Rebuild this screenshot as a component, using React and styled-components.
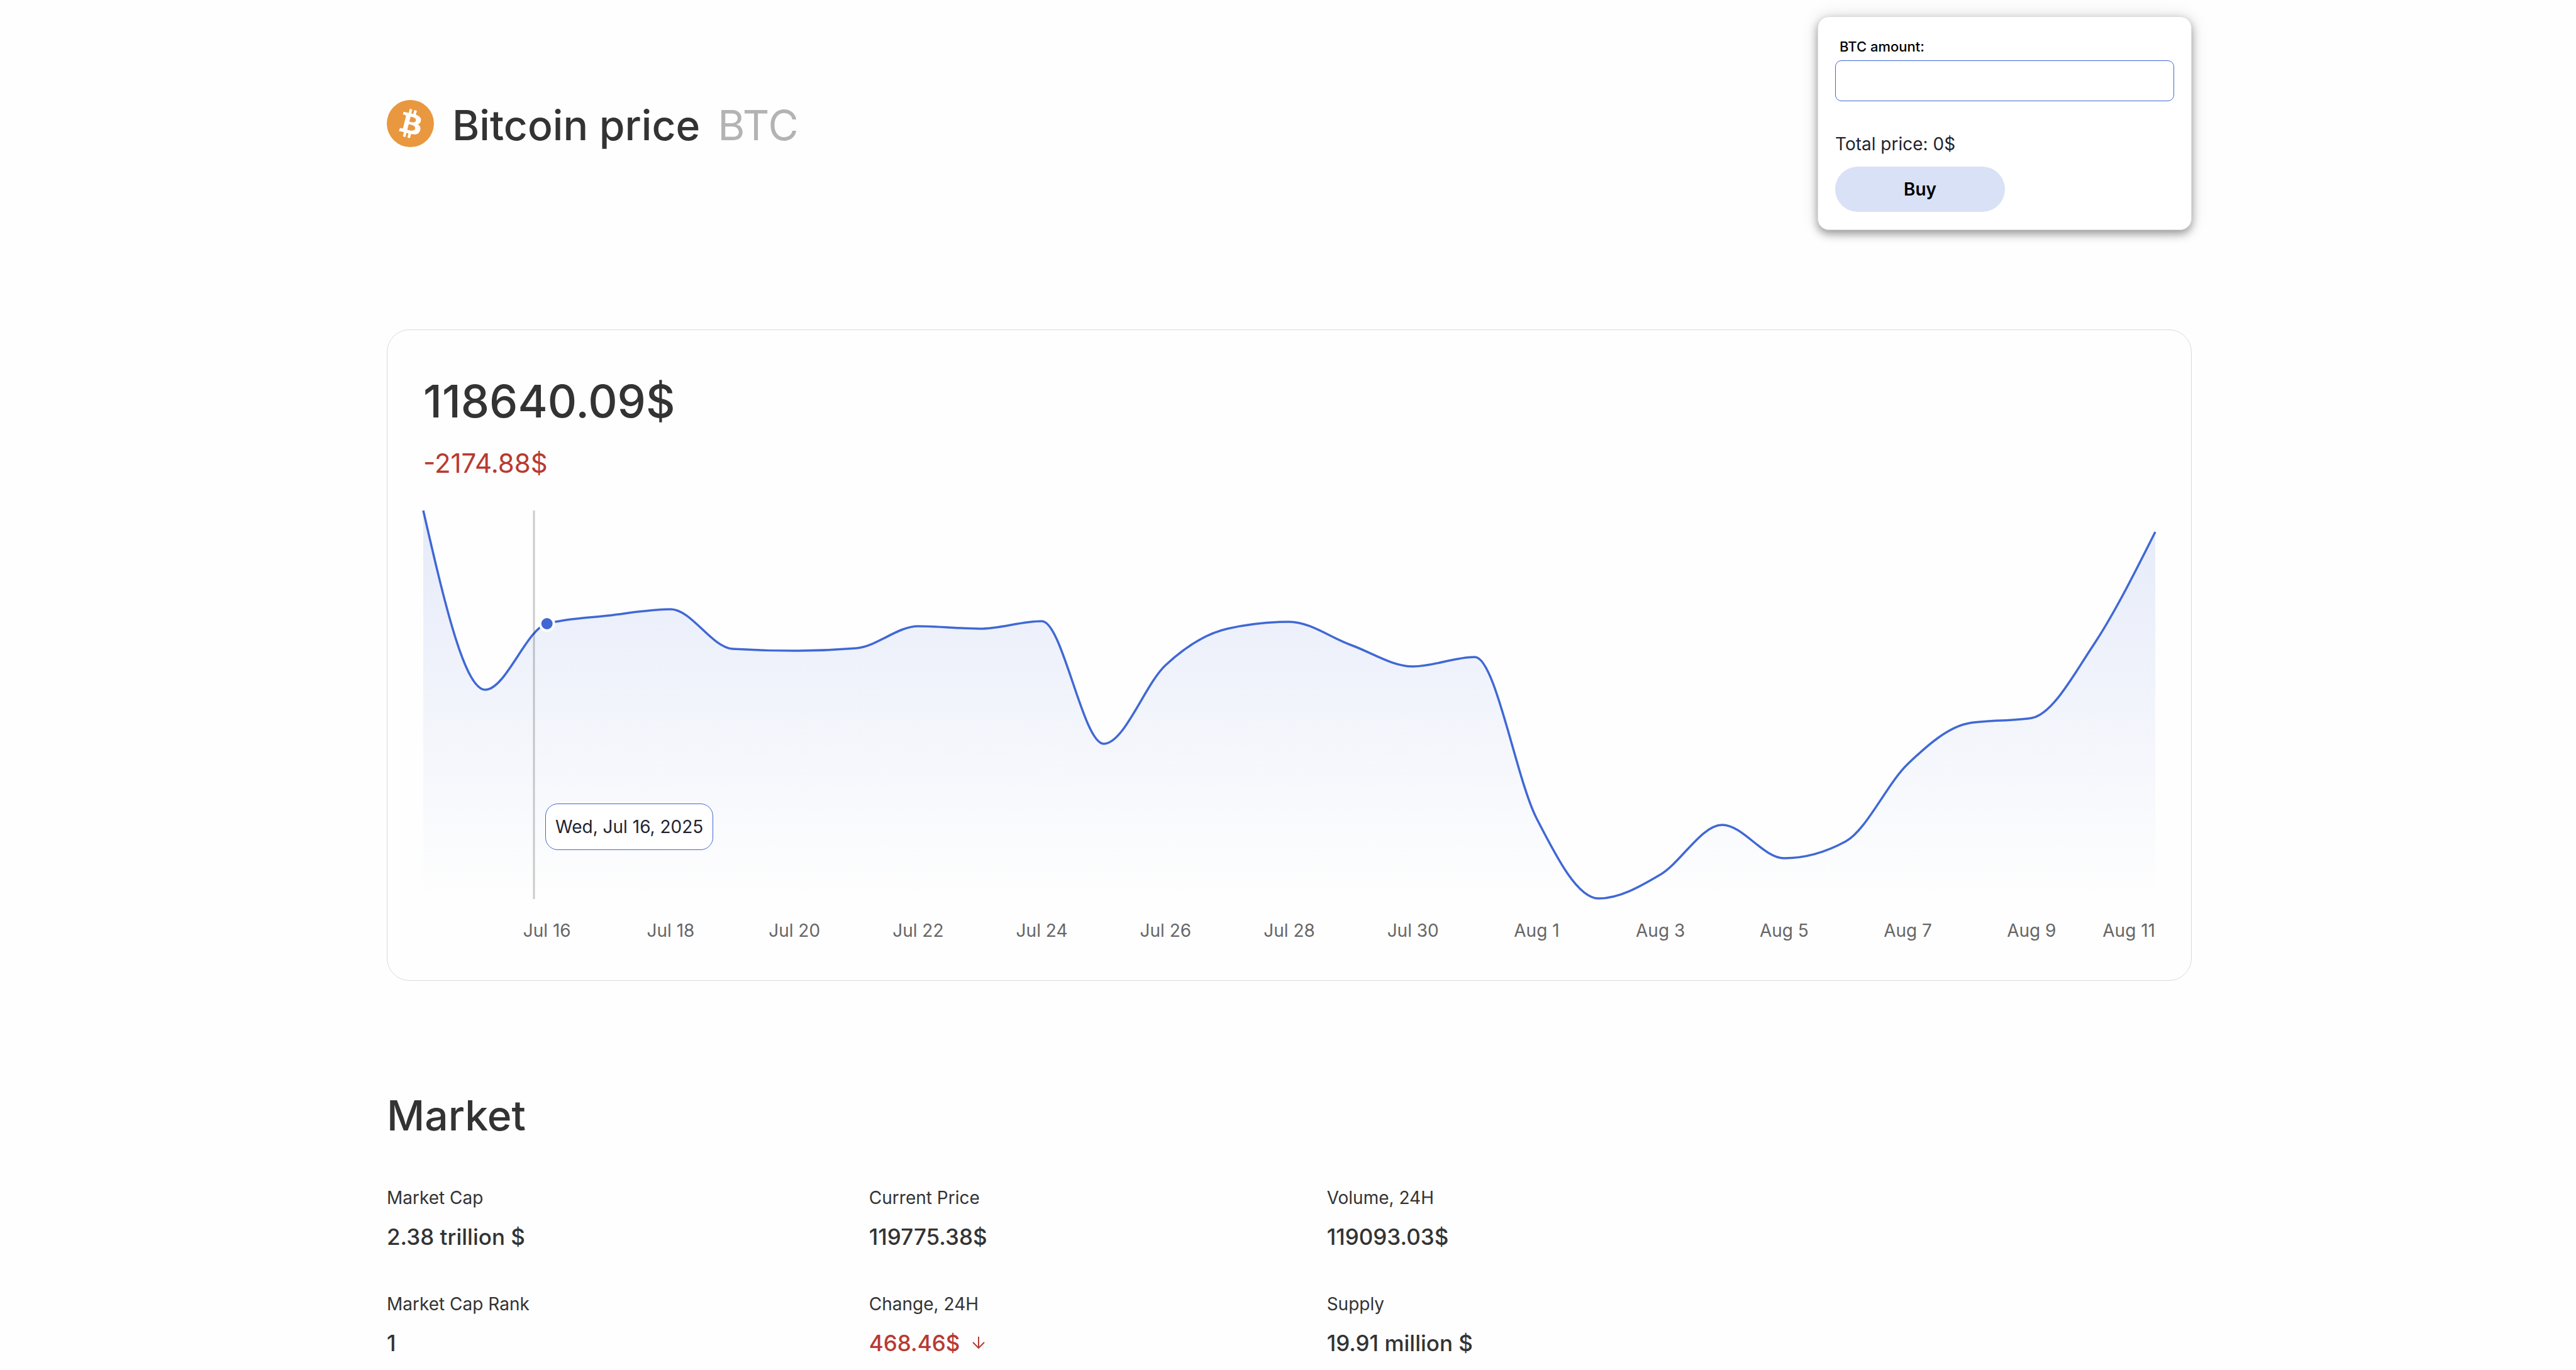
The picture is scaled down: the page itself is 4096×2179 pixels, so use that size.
import React from "react";
import styled, { createGlobalStyle } from "styled-components";

const GlobalStyle = createGlobalStyle`
  * { box-sizing: border-box; }
  body { margin: 0; background: #fefefe; color: #333; font-family: Inter, "Liberation Sans", sans-serif; }
  h1, h2, p, dl, dt, dd { margin: 0; font-weight: 400; }
`;

const Page = styled.main`
  padding: 26px 611px 20px 615px;
`;

const Header = styled.header`
  display: flex;
  align-items: center;
  justify-content: space-between;
`;

const CoinTitle = styled.div`
  display: flex;
  align-items: center;
  gap: 29px;
`;

const CoinLogo = styled.svg`
  width: 75px;
  height: 75px;
`;

const Heading = styled.h1`
  padding-top: 6px;
  font-size: 66px;
  line-height: 84px;
  && { font-weight: 500; }
`;

const Ticker = styled.span`
  margin-left: 28px;
  color: #b3b3b3;
  font-weight: 400;
`;

const BuyForm = styled.form`
  display: flex;
  flex-direction: column;
  align-items: flex-start;
  width: 595px;
  padding: 33px 27px 28px;
  border: 1px solid #ddd;
  border-radius: 18px;
  background: #fff;
  box-shadow: 0 6px 14px rgba(0, 0, 0, 0.36), 0 0 28px rgba(0, 0, 0, 0.12);
`;

const AmountLabel = styled.label`
  padding-left: 7px;
  color: #000;
  font-size: 22px;
  line-height: 28px;
  font-weight: 500;
`;

const AmountInput = styled.input`
  width: 100%;
  height: 65px;
  margin-top: 8px;
  padding: 0 16px;
  border: 1px solid #4068d4;
  border-radius: 10px;
  background: #fff;
  font: inherit;
  font-size: 28px;
`;

const Total = styled.p`
  margin-top: 50px;
  color: #1f2430;
  font-size: 28px;
  line-height: 36px;
`;

const BuyButton = styled.button`
  width: 270px;
  height: 72px;
  margin-top: 18px;
  border: 0;
  border-radius: 36px;
  background: #d9e1f6;
  color: #000;
  font: 600 28px/36px Inter, "Liberation Sans", sans-serif;
`;

const ChartCard = styled.section`
  margin-top: 158px;
  padding: 71px 57px 59px;
  border: 1px solid #dadada;
  border-radius: 36px;
`;

const Price = styled.p`
  font-size: 72px;
  line-height: 84px;
  && { font-weight: 500; }
`;

const Delta = styled.p`
  margin-top: 31px;
  color: #b83a32;
  font-size: 42px;
  line-height: 52px;
`;

const ChartArea = styled.div`
  position: relative;
  margin-top: 49px;
`;

const ChartSvg = styled.svg`
  display: block;
  width: 100%;
  height: auto;
  overflow: visible;

  text {
    fill: #666;
    font-size: 28px;
    text-anchor: middle;
  }

  text:last-of-type { text-anchor: end; }
`;

const Tooltip = styled.div`
  position: absolute;
  left: 194px;
  top: 466px;
  padding: 18px 15px;
  border: 1px solid #4068d4;
  border-radius: 20px;
  background: #fff;
  color: #1f2430;
  font-size: 28px;
  line-height: 36px;
  white-space: nowrap;
`;

const MarketTitle = styled.h2`
  margin-top: 172px;
  font-size: 66px;
  line-height: 84px;
  && { margin-top: 172px; font-weight: 500; }
`;

const MarketStats = styled.dl`
  display: flex;
  gap: 540px;
  && { margin-top: 71px; }
`;

const StatColumn = styled.div`
  display: flex;
  flex-direction: column;
  gap: 67px;
`;

const StatName = styled.dt`
  font-size: 28px;
  line-height: 36px;
`;

const StatValue = styled.dd`
  display: flex;
  align-items: center;
  gap: 20px;
  color: ${(p) => (p.$negative ? "#b83a32" : "#333")};
  font-size: 35px;
  line-height: 44px;
  && { margin-top: 22px; font-weight: 500; }
`;

const ArrowSvg = styled.svg`
  width: 20px;
  height: 20px;
`;

const WIDTH = 2754;
const PLOT_HEIGHT = 618;

// Vertical position of each day's price inside the plot, from Jul 14 to Aug 11.
const series = [
  0, 285, 180, 167, 157, 220, 223, 219, 184, 188, 176, 371, 246, 188, 177,
  214, 248, 233, 490, 617, 579, 500, 553, 526, 403, 338, 330, 214, 34,
];

const step = WIDTH / (series.length - 1);
const points = series.map((y, i) => [i * step, y]);

const ticks = [
  "Jul 16", "Jul 18", "Jul 20", "Jul 22", "Jul 24", "Jul 26", "Jul 28",
  "Jul 30", "Aug 1", "Aug 3", "Aug 5", "Aug 7", "Aug 9", "Aug 11",
];

// Monotone cubic interpolation through the points.
function monotonePath(pts) {
  const n = pts.length;
  const slopes = pts.slice(1).map((p, i) => (p[1] - pts[i][1]) / (p[0] - pts[i][0]));
  const tangents = pts.map((_, i) => {
    if (i === 0 || i === n - 1) return null;
    const a = slopes[i - 1];
    const b = slopes[i];
    return (Math.sign(a) + Math.sign(b)) * Math.min(Math.abs(a), Math.abs(b), Math.abs(a + b) / 4) || 0;
  });
  tangents[0] = (3 * slopes[0] - tangents[1]) / 2;
  tangents[n - 1] = (3 * slopes[n - 2] - tangents[n - 2]) / 2;
  return pts.slice(1).reduce((d, [x, y], i) => {
    const [px, py] = pts[i];
    const t = (x - px) / 3;
    return `${d}C${px + t},${py + t * tangents[i]} ${x - t},${y - t * tangents[i + 1]} ${x},${y}`;
  }, `M${pts[0][0]},${pts[0][1]}`);
}

const linePath = monotonePath(points);
const areaPath = `${linePath}L${WIDTH},${PLOT_HEIGHT}L0,${PLOT_HEIGHT}Z`;

const market = [
  [
    { name: "Market Cap", value: "2.38 trillion $" },
    { name: "Market Cap Rank", value: "1" },
  ],
  [
    { name: "Current Price", value: "119775.38$" },
    { name: "Change, 24H", value: "468.46$", negative: true },
  ],
  [
    { name: "Volume, 24H", value: "119093.03$" },
    { name: "Supply", value: "19.91 million $" },
  ],
];

function BitcoinLogo() {
  return (
    <CoinLogo viewBox="0 0 32 32" aria-hidden="true">
      <circle cx="16" cy="16" r="16" fill="#e9983f" />
      <path
        fill="#fff"
        d="M23.189 14.02c.314-2.096-1.283-3.223-3.465-3.975l.708-2.84-1.728-.43-.69 2.765c-.454-.114-.92-.22-1.385-.326l.695-2.783L15.596 6l-.708 2.839c-.376-.086-.746-.17-1.104-.26l.002-.009-2.384-.595-.46 1.846s1.283.294 1.256.312c.7.175.826.638.805 1.006l-.806 3.235c.048.012.11.03.18.057l-.183-.045-1.13 4.532c-.086.212-.303.531-.793.41.018.025-1.256-.313-1.256-.313l-.858 1.978 2.25.561c.418.105.828.215 1.231.318l-.715 2.872 1.727.43.708-2.84c.472.127.93.245 1.378.357l-.706 2.828 1.728.43.715-2.866c2.948.558 5.164.333 6.097-2.333.752-2.146-.037-3.385-1.588-4.192 1.13-.26 1.98-1.003 2.207-2.538zm-3.95 5.538c-.533 2.147-4.148.986-5.32.695l.95-3.805c1.172.293 4.929.872 4.37 3.11zm.535-5.569c-.487 1.953-3.495.96-4.47.717l.86-3.45c.975.243 4.118.696 3.61 2.733z"
      />
    </CoinLogo>
  );
}

function DownArrow() {
  return (
    <ArrowSvg viewBox="0 0 20 20" fill="none" stroke="currentColor" strokeWidth="2" aria-hidden="true">
      <path d="M10 0V18M1 9L10 18L19 9" />
    </ArrowSvg>
  );
}

function PriceChart() {
  return (
    <ChartArea>
      <ChartSvg viewBox={`0 0 ${WIDTH} 688`}>
        <defs>
          <linearGradient id="area" x1="0" y1="0" x2="0" y2="1">
            <stop offset="0" stopColor="#4068d4" stopOpacity="0.13" />
            <stop offset="1" stopColor="#4068d4" stopOpacity="0" />
          </linearGradient>
        </defs>
        <path d={areaPath} fill="url(#area)" />
        <path d={linePath} fill="none" stroke="#4068d4" strokeWidth="3.5" />
        <path d={`M176 0V${PLOT_HEIGHT}`} stroke="#000" strokeOpacity="0.2" strokeWidth="3" />
        <circle cx={points[2][0]} cy={points[2][1]} r="11" fill="#4068d4" stroke="#fff" strokeWidth="4" />
        {ticks.map((label, i) => (
          <text key={label} x={(i + 1) * 2 * step} y="678">{label}</text>
        ))}
      </ChartSvg>
      <Tooltip>Wed, Jul 16, 2025</Tooltip>
    </ChartArea>
  );
}

export default function App() {
  return (
    <>
      <GlobalStyle />
      <Page>
        <Header>
          <CoinTitle>
            <BitcoinLogo />
            <Heading>Bitcoin price<Ticker>BTC</Ticker></Heading>
          </CoinTitle>
          <BuyForm onSubmit={(e) => e.preventDefault()}>
            <AmountLabel htmlFor="amount">BTC amount:</AmountLabel>
            <AmountInput id="amount" type="text" />
            <Total>Total price: 0$</Total>
            <BuyButton type="submit">Buy</BuyButton>
          </BuyForm>
        </Header>
        <ChartCard>
          <Price>118640.09$</Price>
          <Delta>-2174.88$</Delta>
          <PriceChart />
        </ChartCard>
        <MarketTitle>Market</MarketTitle>
        <MarketStats>
          {market.map((column) => (
            <StatColumn key={column[0].name}>
              {column.map((stat) => (
                <div key={stat.name}>
                  <StatName>{stat.name}</StatName>
                  <StatValue $negative={stat.negative}>
                    {stat.value}
                    {stat.negative && <DownArrow />}
                  </StatValue>
                </div>
              ))}
            </StatColumn>
          ))}
        </MarketStats>
      </Page>
    </>
  );
}
